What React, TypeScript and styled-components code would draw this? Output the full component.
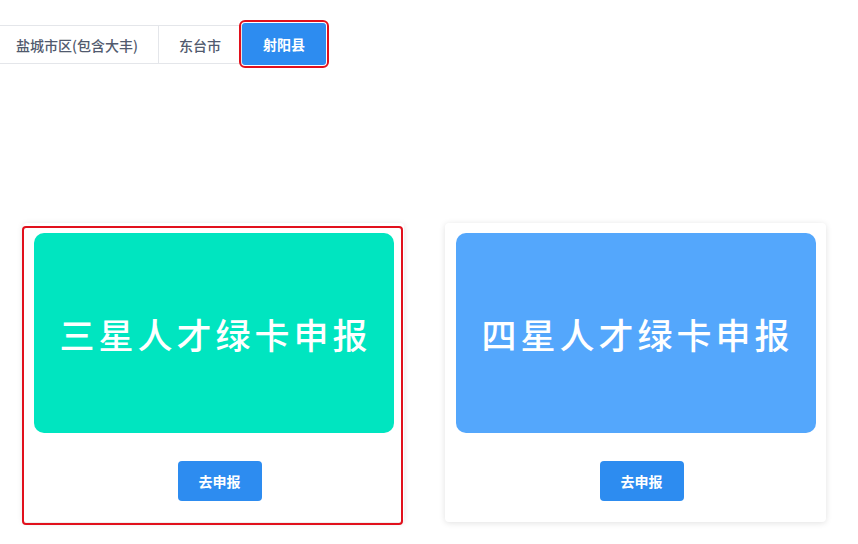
import React, { useState } from 'react';
import styled, { createGlobalStyle } from 'styled-components';

const GlobalStyle = createGlobalStyle`
  body {
    margin: 0;
    background: #fff;
    font-family: "Noto Sans CJK SC", "Noto Sans", sans-serif;
  }
`;

const Page = styled.div`
  width: 858px;
  height: 544px;
  overflow: hidden;
  padding-top: 25px;
  box-sizing: border-box;
`;

const TabBar = styled.div`
  display: flex;
  margin-left: -4px;
  height: 39px;
`;

const Tab = styled.div<{ $active?: boolean }>`
  display: flex;
  align-items: center;
  padding: 0 20px;
  font-size: 14px;
  box-sizing: border-box;
  cursor: pointer;
  ${props =>
    props.$active
      ? `
    margin: -2px 0 -1px;
    padding: 0 21px;
    background: #2d8cf0;
    color: #fff;
    font-weight: 700;
    border-radius: 3px;
    outline: 2px solid #e1101c;
    outline-offset: 1px;
  `
      : `
    color: #515a6e;
    font-weight: 500;
    border-top: 1px solid #e4e6ea;
    border-bottom: 1px solid #e4e6ea;
    border-right: 1px solid #e4e6ea;
  `}
`;

const CardRow = styled.div`
  display: flex;
  gap: 41px;
  margin-top: 159px;
  padding-left: 23px;
`;

const Card = styled.div<{ $selected?: boolean }>`
  position: relative;
  width: 381px;
  height: 299px;
  box-sizing: border-box;
  padding: 10px 10px 0;
  background: #fff;
  border-radius: 4px;
  box-shadow: 0 1px 6px rgba(0, 0, 0, 0.12);
  display: flex;
  flex-direction: column;
  align-items: center;

  ${props =>
    props.$selected &&
    `
    &::after {
      content: '';
      position: absolute;
      top: 3px;
      bottom: -3px;
      left: -1px;
      right: 1px;
      border: 2px solid #e1101c;
      border-radius: 4px;
      pointer-events: none;
    }
  `}
`;

const Banner = styled.div<{ $color: string }>`
  width: 360px;
  height: 200px;
  border-radius: 10px;
  background: ${props => props.$color};
  display: flex;
  align-items: center;
  justify-content: center;
  color: #fff;
  font-size: 35px;
  letter-spacing: 4px;
  text-indent: 4px;
  font-weight: 500;
`;

const ApplyButton = styled.button`
  margin: 28px 0 0 12px;
  width: 84px;
  height: 40px;
  border: none;
  border-radius: 4px;
  background: #2d8cf0;
  color: #fff;
  font-family: inherit;
  font-size: 14px;
  font-weight: 700;
  cursor: pointer;
`;

const tabs = ['盐城市区(包含大丰)', '东台市', '射阳县'];

const cards = [
  { title: '三星人才绿卡申报', color: '#00e5c0' },
  { title: '四星人才绿卡申报', color: '#54a7fc' },
];

const App: React.FC = () => {
  const [active, setActive] = useState(2);

  return (
    <Page>
      <GlobalStyle />
      <TabBar>
        {tabs.map((name, i) => (
          <Tab key={name} $active={i === active} onClick={() => setActive(i)}>
            {name}
          </Tab>
        ))}
      </TabBar>
      <CardRow>
        {cards.map((card, i) => (
          <Card key={card.title} $selected={i === 0}>
            <Banner $color={card.color}>{card.title}</Banner>
            <ApplyButton>去申报</ApplyButton>
          </Card>
        ))}
      </CardRow>
    </Page>
  );
};

export default App;
